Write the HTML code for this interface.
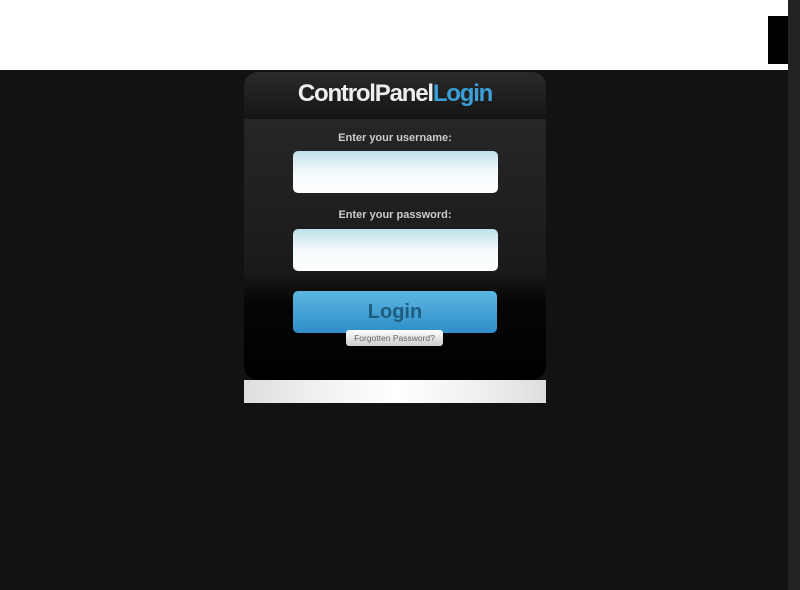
<!DOCTYPE html>
<html><head><style>
body{margin:0;width:800px;height:590px;background:#121212;position:relative;overflow:hidden;font-family:"Liberation Sans",sans-serif}
.top{position:absolute;left:0;top:0;width:800px;height:70px;background:#fff}
.blk{position:absolute;left:768px;top:16px;width:22px;height:48px;background:#000}
.strip{position:absolute;left:788px;top:0;width:12px;height:590px;background:#222}
.panel{position:absolute;left:244px;top:72px;width:302px;height:308px;border-radius:14px;background:linear-gradient(#1b1b1b,#262626 48px,#1a1a1a 200px,#050505 230px,#000);overflow:hidden}
.hdr{height:47px;background:linear-gradient(#2a2a2a,#151515);text-align:center;font-size:24px;font-weight:bold;letter-spacing:-1.2px;line-height:44px;color:#eee}
.hdr span{color:#3a9fd6}
.lbl{position:absolute;left:0;width:302px;text-align:center;color:#ccc;font-size:11px;font-weight:bold}
.inp{position:absolute;left:49px;width:205px;height:42px;border-radius:5px;background:linear-gradient(#bfe0ea,#f4fafc 50%,#fff)}
.btn{position:absolute;left:49px;top:219px;width:204px;height:42px;border-radius:5px;background:linear-gradient(#5cb6e0,#2f8ec9);text-align:center;line-height:42px;font-size:20px;font-weight:bold;color:#1e5c80}
.fp{position:absolute;left:102px;top:258px;width:97px;height:16px;border-radius:3px;background:linear-gradient(#fff,#ccc);font-size:8.5px;color:#666;text-align:center;line-height:16px}
.base{position:absolute;left:244px;top:380px;width:302px;height:23px;background:linear-gradient(90deg,#ddd,#eee 20%,#fff 50%,#eee 80%,#ddd)}
</style></head><body>
<div class="top"></div><div class="blk"></div><div class="strip"></div>
<div class="base"></div>
<div class="panel">
<div class="hdr">ControlPanel<span>Login</span></div>
<div class="lbl" style="top:60px">Enter your username:</div>
<div class="inp" style="top:79px"></div>
<div class="lbl" style="top:137px">Enter your password:</div>
<div class="inp" style="top:157px"></div>
<div class="btn">Login</div>
<div class="fp">Forgotten Password?</div>
</div>
</body></html>
